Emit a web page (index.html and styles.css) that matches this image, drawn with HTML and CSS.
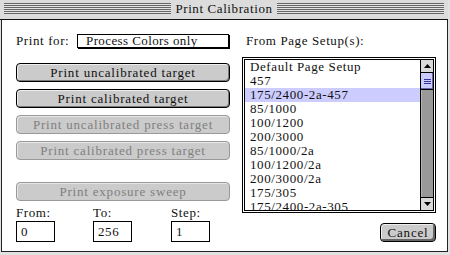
FILE: index.html
```html
<html>
<head>
<link rel="stylesheet" href="styles.css">
</head>
<body>
<div class="window">
  <div class="titlebar">
    <div class="stripes"><span class="title">Print Calibration</span></div>
  </div>
  <div class="content">
    <div class="left">
      <div class="for-row">
        <span class="for-label">Print for:</span>
        <div class="popup">Process Colors only</div>
      </div>
      <div class="btn top">Print uncalibrated target</div>
      <div class="btn">Print calibrated target</div>
      <div class="btn off">Print uncalibrated press target</div>
      <div class="btn off">Print calibrated press target</div>
      <div class="btn off sweep">Print exposure sweep</div>
      <div class="range">
        <span class="range-label">From:</span>
        <span class="range-label">To:</span>
        <span class="range-label">Step:</span>
        <div class="field">0</div>
        <div class="field">256</div>
        <div class="field">1</div>
      </div>
    </div>
    <div class="right">
      <div class="list-label">From Page Setup(s):</div>
      <div class="list-frame">
        <div class="list">
          <ul class="items">
            <li>Default Page Setup</li>
            <li>457</li>
            <li class="sel">175/2400-2a-457</li>
            <li>85/1000</li>
            <li>100/1200</li>
            <li>200/3000</li>
            <li>85/1000/2a</li>
            <li>100/1200/2a</li>
            <li>200/3000/2a</li>
            <li>175/305</li>
            <li class="part">175/2400-2a-305</li>
          </ul>
          <div class="scroll">
            <div class="arrow up"><svg width="7" height="4" viewBox="0 0 7 4"><polygon points="3.5,0 7,4 0,4" fill="#000"/></svg></div>
            <div class="thumb"><span class="grip"></span></div>
            <div class="track"></div>
            <div class="arrow down"><svg width="7" height="4" viewBox="0 0 7 4"><polygon points="0,0 7,0 3.5,4" fill="#000"/></svg></div>
          </div>
        </div>
      </div>
      <div class="actions">
        <div class="btn cancel">Cancel</div>
      </div>
    </div>
  </div>
</div>
</body>
</html>
```

FILE: styles.css
```css
* {
  box-sizing: border-box;
}

body {
  margin: 0;
  background: #e2e2e2;
  font-family: "Liberation Serif", "Times New Roman", "DejaVu Serif", serif;
  font-size: 13px;
  letter-spacing: 0.6px;
  color: #111;
}

.window {
  width: 448px;
  height: 252px;
  display: flex;
  flex-direction: column;
}

/* title bar with the pinstripes */
.titlebar {
  height: 20px;
  padding: 3px 4px 0 4px;
  background: #dcdcdc;
  border-bottom: 1px solid #111;
}
.stripes {
  height: 11px;
  background: repeating-linear-gradient(to bottom, #666 0 1px, #e4e4e4 1px 2px);
  display: flex;
  justify-content: center;
  align-items: center;
}
.title {
  background: #dcdcdc;
  padding: 0 4px;
  line-height: 14px;
}

.content {
  flex: 1;
  width: 447px;
  margin-left: 1px;
  background: #fff;
  border: 1px solid #222;
  border-top: 0;
  display: flex;
  gap: 12px;
  padding: 14px 11px 0 14px;
}

/* left column */
.left {
  width: 214px;
  display: flex;
  flex-direction: column;
}
.for-row {
  display: flex;
  align-items: center;
  height: 14px;
}
.for-label {
  width: 61px;
  line-height: 14px;
}
.popup {
  width: 152px;
  height: 14px;
  border: 1px solid #000;
  box-shadow: 1px 1px 0 #000;
  padding-left: 8px;
  line-height: 12px;
  letter-spacing: 0.4px;
}

.btn {
  height: 19px;
  margin-top: 7px;
  border: 1px solid #000;
  border-radius: 4px;
  background: #cbcbcb;
  box-shadow: inset 1px 1px 0 #eee, inset -1px -1px 0 #7a7a7a;
  text-align: center;
  line-height: 17px;
  letter-spacing: 0.8px;
  white-space: nowrap;
}
.btn.top {
  margin-top: 15px;
}
.btn.sweep {
  margin-top: 22px;
}
.btn.off {
  border-color: #999;
  color: #808080;
  box-shadow: inset 1px 1px 0 #e6e6e6;
}

.range {
  display: grid;
  grid-template-columns: 77px 78px 1fr;
  row-gap: 1px;
  margin-top: 5px;
}
.range-label {
  line-height: 14px;
}
.field {
  width: 39px;
  height: 21px;
  border: 1px solid #000;
  padding-left: 4px;
  line-height: 19px;
}

/* right column */
.right {
  width: 194px;
  display: flex;
  flex-direction: column;
}
.list-label {
  padding-left: 4px;
  line-height: 14px;
}
.list-frame {
  margin-top: 9px;
  height: 156px;
  border: 1px solid #000;
  padding: 1px;
}
.list {
  height: 100%;
  border: 1px solid #000;
  display: flex;
}
.items {
  flex: 1;
  margin: 0;
  padding: 0;
  list-style: none;
  overflow: hidden;
}
.items li {
  height: 14px;
  line-height: 14px;
  padding-left: 5px;
  white-space: nowrap;
}
.items li.sel {
  background: #ccccff;
}
.items li.part {
  height: 10px;
  overflow: hidden;
}

.scroll {
  width: 13px;
  border-left: 1px solid #000;
  display: flex;
  flex-direction: column;
  background: #999;
}
.arrow {
  height: 13px;
  background: #dadada;
  display: flex;
  align-items: center;
  justify-content: center;
}
.arrow.up {
  border-bottom: 1px solid #000;
}
.arrow.down {
  border-top: 1px solid #000;
}
.thumb {
  height: 17px;
  background: #ccccff;
  border-bottom: 1px solid #000;
  box-shadow: inset -1px -1px 0 #6666aa;
  display: flex;
  align-items: center;
  justify-content: center;
}
.grip {
  width: 7px;
  height: 5px;
  background: repeating-linear-gradient(to bottom, #333399 0 1px, transparent 1px 2px);
}
.track {
  flex: 1;
  background: #999;
  box-shadow: inset 1px 0 0 #b5b5b5;
}

.actions {
  display: flex;
  justify-content: flex-end;
  margin-top: 10px;
}
.btn.cancel {
  width: 56px;
  margin-top: 0;
  box-shadow: inset 1px 1px 0 #eee, inset -2px -2px 0 #666;
}
```
